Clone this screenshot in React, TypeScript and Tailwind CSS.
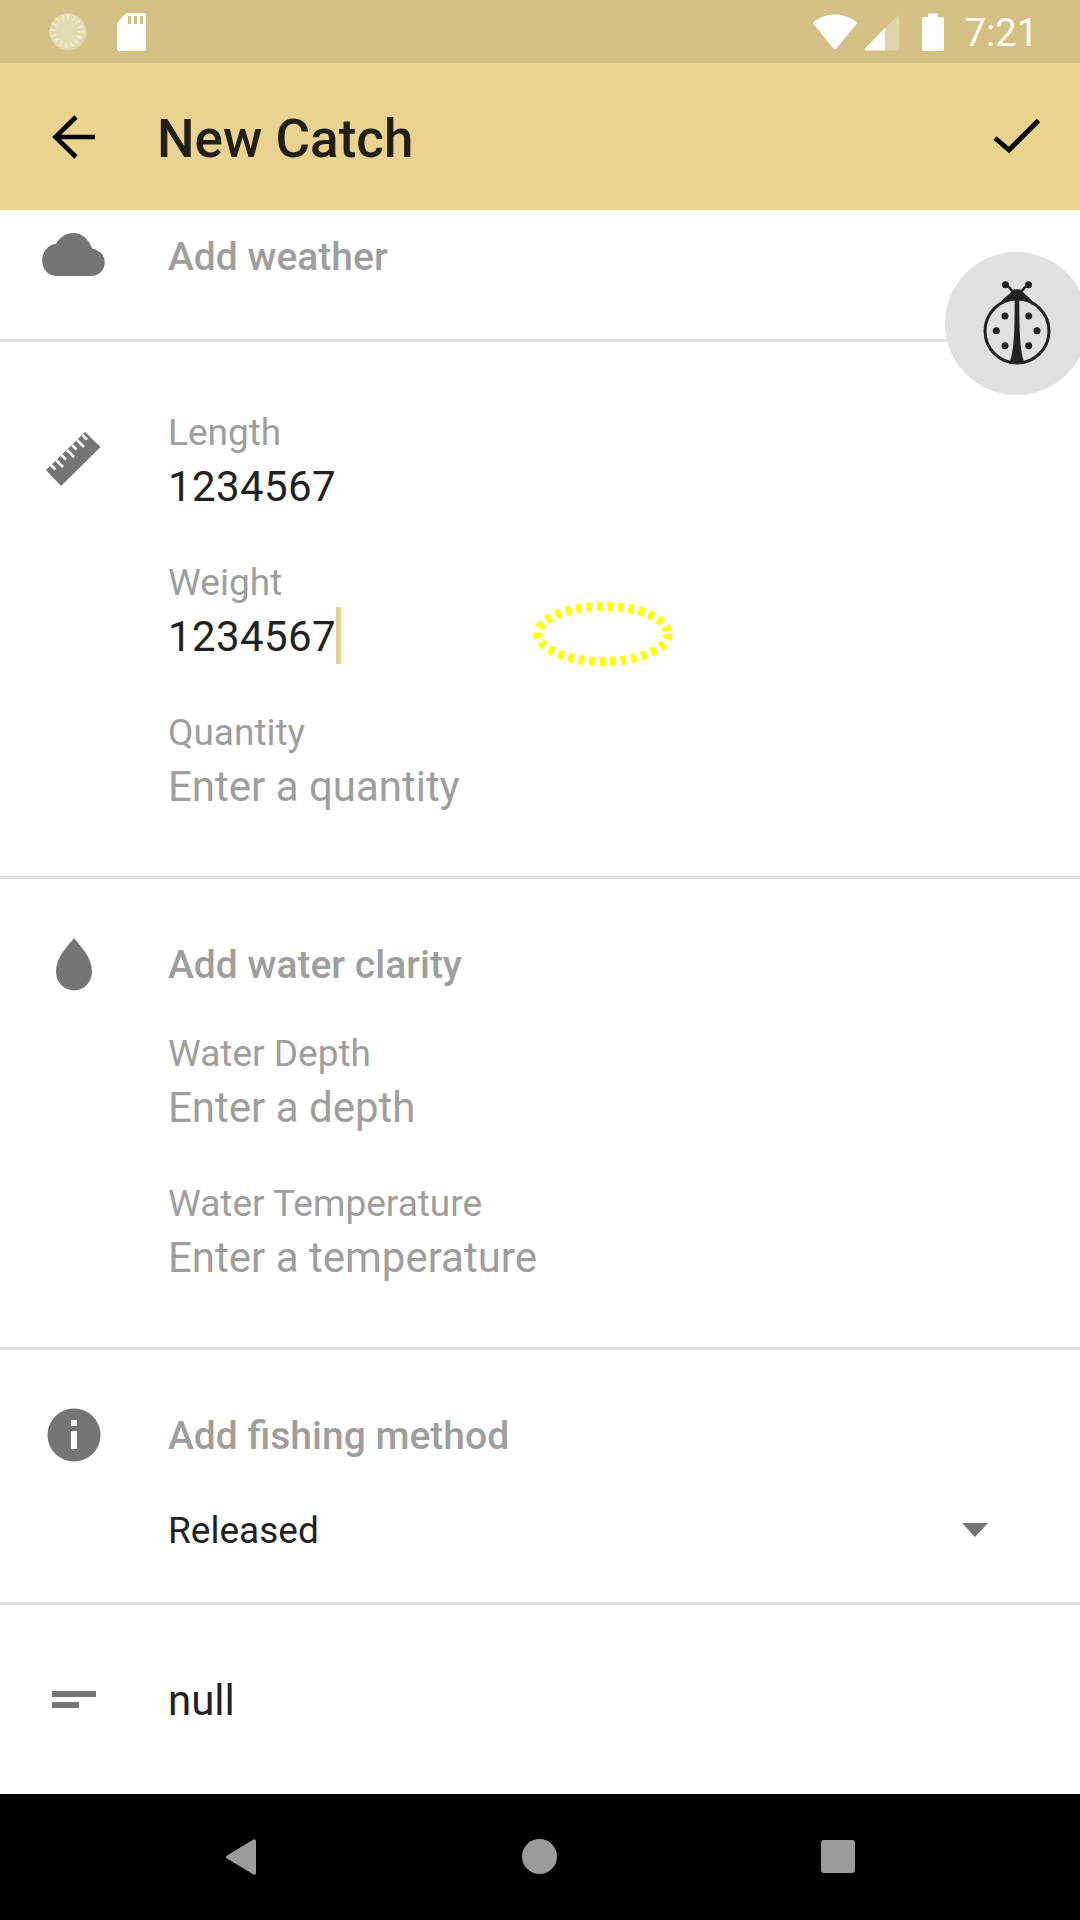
import React from "react";

const font = { fontFamily: "Roboto, 'Noto Sans', sans-serif" };

function Field({ label, value, placeholder, cursor }: { label: string; value?: string; placeholder?: string; cursor?: boolean }) {
  return (
    <div className="flex flex-col">
      <div className="h-[50px] text-[37px] leading-[46px] text-[#9e9e9e]">{label}</div>
      {value ? (
        <div className="h-[54px] flex items-center text-[42px] leading-[54px] tracking-[0.4px] text-[#212121]">
          <span>{value}</span>
          {cursor && <span className="w-[5px] h-[57px] mt-[-4px] bg-[#e8d28f]" />}
        </div>
      ) : (
        <div className="h-[54px] flex items-center text-[42px] leading-[54px] text-[#9e9e9e]">
          <span>{placeholder}</span>
        </div>
      )}
    </div>
  );
}

function IconCell({ children }: { children: React.ReactNode }) {
  return <div className="w-[147px] mr-[21px] shrink-0 flex justify-center items-center">{children}</div>;
}

function Divider() {
  return <div className="h-[3px] shrink-0 bg-[#dfe0e1]" />;
}

function Bug() {
  return (
    <svg width="68" height="86" viewBox="0 0 68 86" fill="#212225">
      <circle cx="34" cy="50" r="32" fill="none" stroke="#212225" strokeWidth="3" />
      <path d="M18 21 C22 15 27 14 29 9 C32 8 36 8 39 9 C41 14 46 15 50 21 C44 18 39 17 34 17 C29 17 24 18 18 21Z" />
      <path d="M31.700 16h4.600 C36.300 50 37 72 41.500 81 C36 83.500 32 83.500 26.500 81 C31 72 31.700 50 31.700 16Z" />
      <path d="M29 10 C27 7 26 5 23 4 M39 10 C41 7 42 5 45 4" fill="none" stroke="#212225" strokeWidth="2.400" />
      <circle cx="22.500" cy="3.800" r="3.500" /><circle cx="45.500" cy="3.800" r="3.500" />
      <circle cx="22" cy="35" r="3.500" /><circle cx="45.700" cy="35" r="3.500" />
      <circle cx="13.300" cy="49.700" r="3.500" /><circle cx="54" cy="49.700" r="3.500" />
      <circle cx="22" cy="64.700" r="3.500" /><circle cx="45.700" cy="64.700" r="3.500" />
    </svg>
  );
}

export default function App() {
  return (
    <div style={font} className="relative w-[1080px] h-[1920px] overflow-hidden bg-white flex flex-col">
      {/* Status bar */}
      <div className="h-[63px] shrink-0 bg-[#d4c084] flex items-center pl-[49px] pr-[42px]">
        <svg width="38" height="38" viewBox="0 0 38 38" className="mr-[29px]">
          <circle cx="19" cy="19" r="18.500" fill="#fff" fillOpacity="0.35" />
          <circle cx="18" cy="18" r="17" fill="#e6dab3" />
          <path d="M35 8 A18.500 18.500 0 0 1 8 34 A17 17 0 0 0 35 8Z" fill="#fff" />
          <circle cx="18" cy="18" r="14" fill="none" stroke="#f1ead2" strokeWidth="6" strokeDasharray="1.500 4" />
        </svg>
        <svg width="31" height="38" viewBox="0 0 31 38">
          <path d="M10 0 H28 a2 2 0 0 1 2 2 V36 a2 2 0 0 1 -2 2 H3 a2 2 0 0 1 -2 -2 V10Z" fill="#fff" />
          <path d="M12 3h3v8h-3zM18 3h3v8h-3zM24 3h3v8h-3z" fill="#d4c084" />
        </svg>
        <div className="flex-1" />
        <svg width="46" height="38" viewBox="0 0 46 38" className="mr-[6px]">
          <path d="M1.500 9 C14 -1 32 -1 44.500 9 Q45.500 10 44.500 11 L24.500 35.500 Q23 37 21.500 35.500 L1.500 11 Q0.500 10 1.500 9Z" fill="#fff" />
        </svg>
        <svg width="36" height="36" viewBox="0 0 36 36" className="mr-[22px] mt-[2px]">
          <path d="M34 0.500 a1.500 1.500 0 0 1 1.500 1.500 V34 a1.500 1.500 0 0 1 -1.500 1.500 H21 V13Z" fill="#e0d2ab" />
          <path d="M21 13 V35.500 H1.500 Q0 35 1 33.500Z" fill="#fff" />
        </svg>
        <svg width="22" height="38" viewBox="0 0 22 38" className="mr-[21px]">
          <path d="M6 0.500 H16 V4 H20 a2 2 0 0 1 2 2 V36 a2 2 0 0 1 -2 2 H2 a2 2 0 0 1 -2 -2 V6 a2 2 0 0 1 2 -2 H6Z" fill="#fff" />
        </svg>
        <span className="text-[38px] leading-[40px] text-[#fdfbf4] mt-[3px]">7:21</span>
      </div>

      {/* Toolbar */}
      <div className="h-[147px] shrink-0 bg-[#ead390] flex items-center">
        <IconCell>
          <svg width="44" height="44" viewBox="0 0 44 44" fill="none" stroke="#000" strokeWidth="4.600">
            <path d="M43 22 H3.500 M24 2 L3.500 22 L24 42" />
          </svg>
        </IconCell>
        <div className="text-[53px] font-medium text-[#211f16] flex-1 ml-[-11px] mt-[6px]">New Catch</div>
        <svg width="48" height="36" viewBox="0 0 48 36" fill="none" stroke="#000" strokeWidth="4.800" className="mr-[39px] mt-[-2px]">
          <path d="M2 20 L16 32 L45.500 2.500" />
        </svg>
      </div>

      {/* Content */}
      <div className="flex-1 flex flex-col min-h-0">
        <div className="h-[129px] shrink-0 flex items-start pt-[23px]">
          <IconCell>
            <svg width="63" height="43" viewBox="0 0 64 44" fill="#757575">
              <path d="M14 44 H50 C58 44 64 38 64 30 C64 22 58 17 51 16 C48 7 41 0 32 0 C23 0 17 6 14 11 C6 12 0 19 0 28 C0 37 6 44 14 44Z" />
            </svg>
          </IconCell>
          <div className="text-[39px] font-medium leading-[50px] text-[#9e9e9e] mt-[-1px]">Add weather</div>
        </div>
        <Divider />

        <div className="h-[534px] shrink-0 flex items-start pt-[68px]">
          <div className="w-[145px] mr-[23px] shrink-0 flex justify-center pt-[21px]">
            <svg width="56" height="56" viewBox="0 0 56 56">
              <path d="M40 1 L55.500 16 L16 55 L1 39Z" fill="#757575" />
              <path d="M6 34 L10.500 38.500 M11 29 L18 36 M16.500 24 L21 28.500 M22 19 L29 26 M27 14 L31.500 18.500 M32 9 L39 16 M37.500 4 L42 8.500" stroke="#fff" strokeWidth="2.600" />
            </svg>
          </div>
          <div className="flex flex-col gap-[46px]">
            <Field label="Length" value="1234567" />
            <Field label="Weight" value="1234567" cursor />
            <Field label="Quantity" placeholder="Enter a quantity" />
          </div>
        </div>
        <Divider />

        <div className="h-[468px] shrink-0 flex flex-col pt-[58px]">
          <div className="flex items-center h-[54px]">
            <IconCell>
              <svg width="38" height="53" viewBox="0 0 38 53" fill="#757575">
                <path d="M19 0 C26 9 37 19 37 34 C37 44 29 52.500 19 52.500 C9 52.500 1 44 1 34 C1 19 12 9 19 0Z" />
              </svg>
            </IconCell>
            <div className="text-[39px] font-medium leading-[50px] text-[#9e9e9e] mt-[2px]">Add water clarity</div>
          </div>
          <div className="flex flex-col gap-[46px] pl-[168px] pt-[40px]">
            <Field label="Water Depth" placeholder="Enter a depth" />
            <Field label="Water Temperature" placeholder="Enter a temperature" />
          </div>
        </div>
        <Divider />

        <div className="h-[252px] shrink-0 flex flex-col pt-[58px]">
          <div className="flex items-center h-[54px]">
            <IconCell>
              <svg width="54" height="54" viewBox="0 0 54 54">
                <circle cx="27" cy="27" r="26.500" fill="#757575" />
                <path d="M24 12h6v6h-6zM24 23h6v18h-6z" fill="#fff" />
              </svg>
            </IconCell>
            <div className="text-[39px] font-medium leading-[50px] text-[#9e9e9e] mt-[2px]">Add fishing method</div>
          </div>
          <div className="flex items-center pl-[168px] pr-[92px] mt-[44px] h-[50px]">
            <span className="flex-1 text-[37px] leading-[50px] text-[#212121]">Released</span>
            <svg width="26" height="14" viewBox="0 0 26 14" fill="#757575" className="mt-[-2px]">
              <path d="M0 0H26L13 14Z" />
            </svg>
          </div>
        </div>
        <Divider />

        <div className="flex-1 flex items-center">
          <IconCell>
            <svg width="44" height="17" viewBox="0 0 44 17" fill="#757575">
              <path d="M0 0H44V6H0zM0 11H27V17H0z" />
            </svg>
          </IconCell>
          <div className="text-[42px] leading-[56px] text-[#212121] mt-[3px]">null</div>
        </div>
      </div>

      {/* Nav bar */}
      <div className="h-[126px] shrink-0 bg-black relative">
        <svg width="32" height="36" viewBox="0 0 32 36" fill="#9b9b9b" className="absolute left-[225px] top-[45px]">
          <path d="M28.500 0.500 Q31 -0.500 31 2.500 V33.500 Q31 36.500 28.500 35.500 L2 19.500 Q0 18 2 16.500Z" />
        </svg>
        <div className="absolute left-[522px] top-[45px] w-[35px] h-[35px] rounded-full bg-[#9b9b9b]" />
        <div className="absolute left-[821px] top-[46px] w-[34px] h-[33px] rounded-[3px] bg-[#9b9b9b]" />
      </div>

      {/* Debug floating button */}
      <div className="absolute left-[945px] top-[252px] w-[143px] h-[143px] rounded-full bg-[#dfe0e2] flex items-center justify-center">
        <Bug />
      </div>

      {/* Touch pointer ring */}
      <svg width="150" height="80" viewBox="0 0 150 80" className="absolute left-[528px] top-[594px]">
        <ellipse cx="75" cy="40" rx="65" ry="27.500" fill="none" stroke="#ffff00" strokeWidth="9" strokeDasharray="5.500 5" />
      </svg>
    </div>
  );
}
